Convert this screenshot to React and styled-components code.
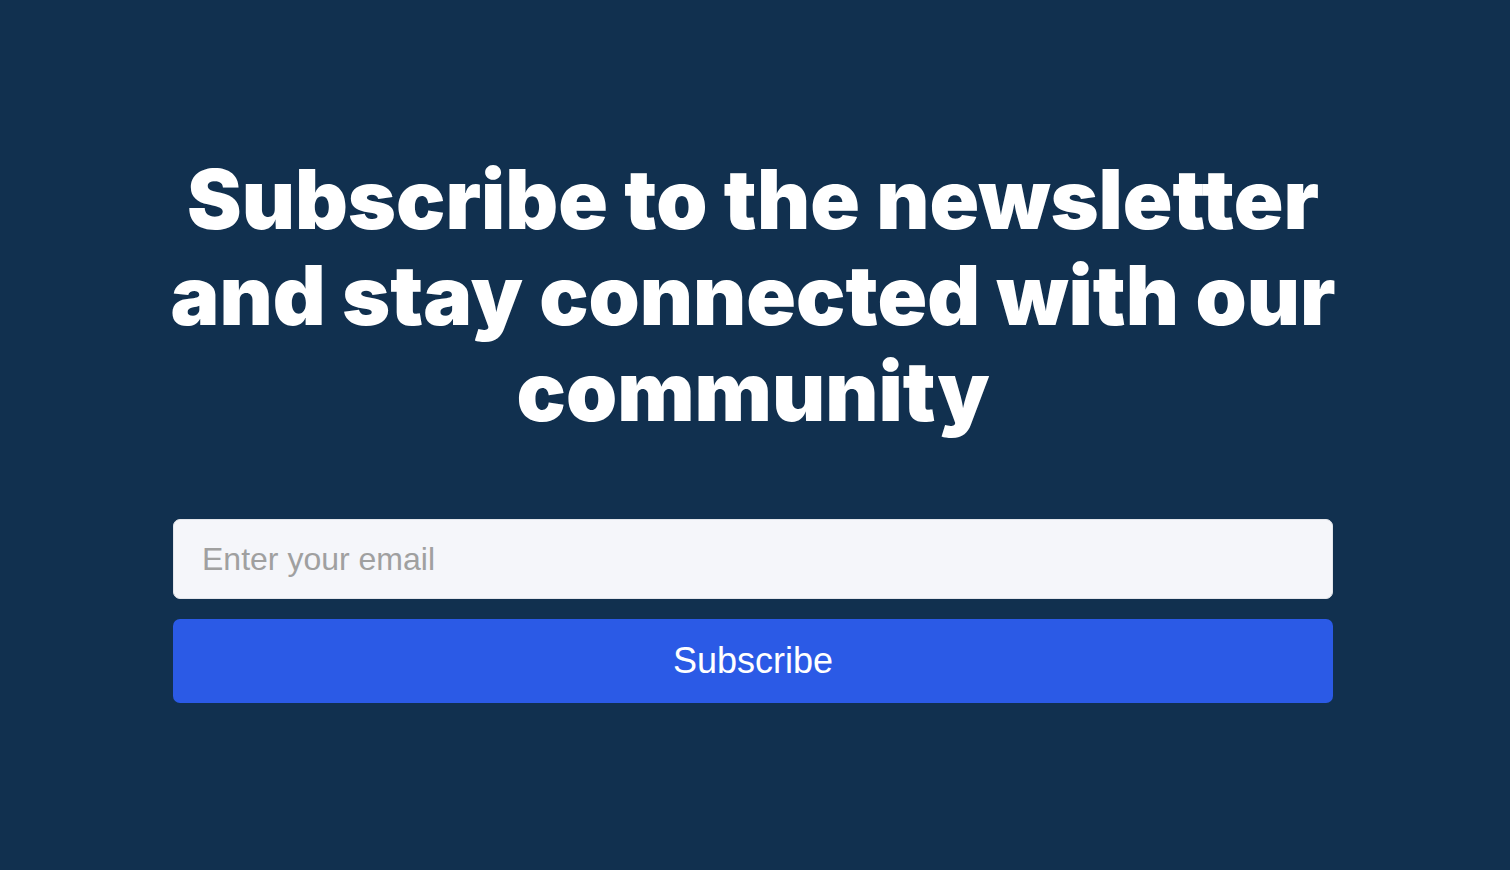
import styled, { createGlobalStyle } from 'styled-components';

const GlobalStyle = createGlobalStyle`
  * { box-sizing: border-box; }
  html, body {
    margin: 0;
    padding: 0;
    background: #11304f;
  }
  body {
    font-family: "Liberation Sans", Arial, sans-serif;
  }
`;

const Page = styled.main`
  min-height: 100vh;
  display: flex;
  flex-direction: column;
  align-items: center;
  padding: 152px 4px 0 0;
`;

const Title = styled.h1`
  margin: 0;
  width: 1190px;
  text-align: center;
  color: #ffffff;
  font-family: Inter, "Noto Sans", sans-serif;
  font-weight: 900;
  font-size: 82px;
  line-height: 96px;
  letter-spacing: 0;
`;

const Form = styled.form`
  width: 1160px;
  margin-top: 79px;
  display: flex;
  flex-direction: column;
  gap: 20px;
`;

const EmailInput = styled.input`
  height: 80px;
  padding: 0 28px;
  border: 1px solid #e3e5ea;
  border-radius: 7px;
  background: #f5f6fa;
  font-family: "Liberation Sans", Arial, sans-serif;
  font-size: 32px;
  color: #333;
  outline: none;

  &::placeholder {
    color: #a0a0a0;
  }
`;

const SubmitButton = styled.button`
  height: 84px;
  border: none;
  border-radius: 7px;
  background: #2b5ae6;
  color: #ffffff;
  font-family: "Liberation Sans", Arial, sans-serif;
  font-size: 36px;
  cursor: pointer;
`;

export default function App() {
    return <>
        <GlobalStyle />
        <Page>
            <Title>Subscribe to the newsletter and stay connected with our community</Title>
            <Form onSubmit={(e) => e.preventDefault()}>
                <EmailInput type="email" placeholder="Enter your email" />
                <SubmitButton type="submit">Subscribe</SubmitButton>
            </Form>
        </Page>
    </>;
}
